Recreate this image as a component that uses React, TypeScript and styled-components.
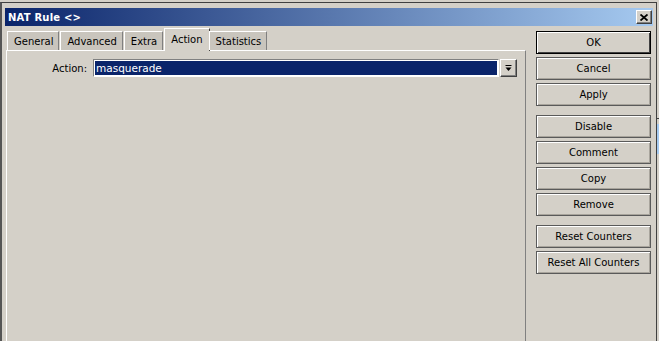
import React from 'react';
import styled, { createGlobalStyle } from 'styled-components';

const GlobalStyle = createGlobalStyle`
  html, body {
    margin: 0;
    padding: 0;
    background: #d4d0c8;
    overflow: hidden;
  }
  body {
    font-family: "DejaVu Sans", "Liberation Sans", sans-serif;
    font-size: 10px;
    color: #000;
  }
`;

const Page = styled.div`
  width: 659px;
  height: 341px;
  display: flex;
  overflow: hidden;
  background: #d4d0c8;
`;

const Frame = styled.div`
  width: 657px;
  height: 339px;
  margin-top: 2px;
  box-sizing: border-box;
  border-top: 1px solid #404040;
  border-left: 2px solid #555555;
  border-right: 1px solid #404040;
  padding: 5px 3px 0 3px;
  display: flex;
  flex-direction: column;
  flex-shrink: 0;
`;

const BehindStrip = styled.div`
  flex: 1;
  display: flex;
  flex-direction: column;
  padding-top: 118px;
`;

const StripLine = styled.div`
  height: 1px;
  background: #404040;
  margin-bottom: 5px;
`;

const StripBlue = styled.div`
  height: 30px;
  background: #a6caf0;
`;

const TitleBar = styled.div`
  height: 18px;
  display: flex;
  align-items: center;
  justify-content: space-between;
  background: linear-gradient(to right, #0a246a, #a6caf0);
  padding: 0 1px 0 3px;
`;

const Title = styled.span`
  color: #fff;
  font-weight: bold;
  font-size: 10px;
  letter-spacing: 0.2px;
`;

const CloseButton = styled.div`
  width: 16px;
  height: 14px;
  box-sizing: border-box;
  background: #d4d0c8;
  border: 1px solid;
  border-color: #ffffff #404040 #404040 #ffffff;
  box-shadow: inset -1px -1px 0 #808080;
  display: flex;
  align-items: center;
  justify-content: center;
`;

const Body = styled.div`
  flex: 1;
  display: flex;
  margin-top: 1px;
  min-height: 0;
`;

const LeftPane = styled.div`
  width: 521px;
  display: flex;
  flex-direction: column;
  padding-top: 1px;
`;

const TabRow = styled.div`
  height: 22px;
  display: flex;
  align-items: flex-end;
  padding-left: 2px;
  position: relative;
  z-index: 1;
`;

const Tab = styled.div<{ $active?: boolean }>`
  box-sizing: border-box;
  height: ${(p) => (p.$active ? '23px' : '19px')};
  margin: ${(p) => (p.$active ? '0 -1px -1px 0' : '0 1px 0 0')};
  padding: ${(p) => (p.$active ? '0 6px 2px 6px' : '0 5px 0 6px')};
  display: flex;
  align-items: center;
  background: ${(p) => (p.$active ? '#d4d0c8' : '#c9c5bd')};
  border-left: 1px solid #ffffff;
  border-top: 1px solid #ffffff;
  border-right: 1px solid ${(p) => (p.$active ? '#404040' : '#808080')};
  white-space: nowrap;
`;

const Panel = styled.div`
  flex: 1;
  margin-left: 1px;
  border-top: 1px solid #ffffff;
  border-left: 1px solid #ffffff;
  border-right: 1px solid #808080;
  padding: 8px 0 0 0;
`;

const FieldRow = styled.div`
  display: flex;
  align-items: center;
  height: 18px;
`;

const FieldLabel = styled.label`
  width: 86px;
  text-align: right;
  padding-right: 6px;
  box-sizing: border-box;
`;

const SelectBox = styled.div`
  width: 406px;
  height: 18px;
  box-sizing: border-box;
  border: 1px solid;
  border-color: #808080 #ffffff #ffffff #808080;
  box-shadow: inset 0 0 0 1px #ffffff;
  background: #0a246a;
  color: #fff;
  display: flex;
  align-items: center;
  padding-left: 2px;
  font-size: 10.5px;
`;

const DropButton = styled.div`
  width: 17px;
  height: 18px;
  margin-left: 1px;
  box-sizing: border-box;
  background: #d4d0c8;
  border: 1px solid;
  border-color: #ffffff #404040 #404040 #ffffff;
  box-shadow: inset -1px -1px 0 #808080;
  display: flex;
  align-items: center;
  justify-content: center;
`;

const ButtonColumn = styled.div`
  flex: 1;
  display: flex;
  flex-direction: column;
  padding: 4px 0 0 10px;
  gap: 3px;
`;

const Button = styled.div<{ $default?: boolean; $groupStart?: boolean }>`
  width: 115px;
  height: 23px;
  box-sizing: border-box;
  display: flex;
  align-items: center;
  justify-content: center;
  background: #d4d0c8;
  border: 1px solid ${(p) => (p.$default ? '#000000' : '#5a5a5a')};
  box-shadow: ${(p) =>
    p.$default
      ? 'inset 1px 1px 0 #ffffff, inset -1px -1px 0 #404040'
      : 'inset 1px 1px 0 #ffffff, inset -1px -1px 0 #a8a49c'};
  margin-top: ${(p) => (p.$groupStart ? '6px' : '0')};
  white-space: nowrap;
`;

const tabs = ['General', 'Advanced', 'Extra', 'Action', 'Statistics'];

const buttons: { label: string; isDefault?: boolean; groupStart?: boolean }[] = [
  { label: 'OK', isDefault: true },
  { label: 'Cancel' },
  { label: 'Apply' },
  { label: 'Disable', groupStart: true },
  { label: 'Comment' },
  { label: 'Copy' },
  { label: 'Remove' },
  { label: 'Reset Counters', groupStart: true },
  { label: 'Reset All Counters' },
];

export default function App() {
  return (
    <Page>
      <GlobalStyle />
      <Frame>
        <TitleBar>
          <Title>NAT Rule &lt;&gt;</Title>
          <CloseButton>
            <svg width="8" height="7" viewBox="0 0 8 7">
              <path d="M0.5 0.5 L7.5 6.5 M7.5 0.5 L0.5 6.5" stroke="#000" strokeWidth="1.8" />
            </svg>
          </CloseButton>
        </TitleBar>
        <Body>
          <LeftPane>
            <TabRow>
              {tabs.map((t) => (
                <Tab key={t} $active={t === 'Action'}>
                  {t}
                </Tab>
              ))}
            </TabRow>
            <Panel>
              <FieldRow>
                <FieldLabel>Action:</FieldLabel>
                <SelectBox>masquerade</SelectBox>
                <DropButton>
                  <svg width="7" height="7" viewBox="0 0 7 7">
                    <rect x="0.5" y="0" width="6" height="1" fill="#000" />
                    <polygon points="0.5,2.5 6.5,2.5 3.5,6" fill="#000" />
                  </svg>
                </DropButton>
              </FieldRow>
            </Panel>
          </LeftPane>
          <ButtonColumn>
            {buttons.map((b) => (
              <Button key={b.label} $default={b.isDefault} $groupStart={b.groupStart}>
                {b.label}
              </Button>
            ))}
          </ButtonColumn>
        </Body>
      </Frame>
      <BehindStrip>
        <StripLine />
        <StripBlue />
      </BehindStrip>
    </Page>
  );
}
